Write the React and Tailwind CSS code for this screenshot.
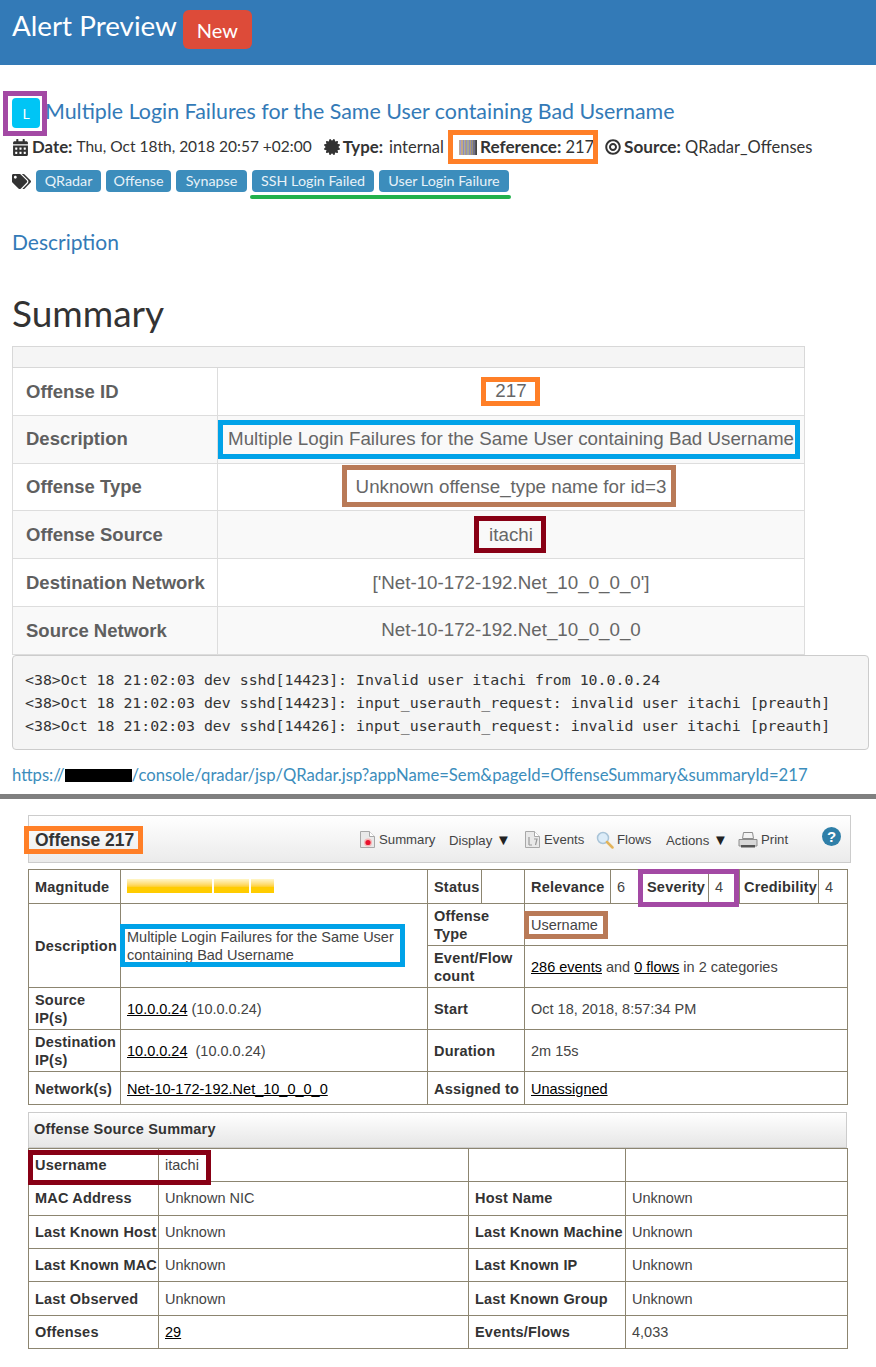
import { FaCalendarAlt, FaCertificate, FaBullseye, FaTags } from 'react-icons/fa'

const sourceSans = { fontFamily: 'Lato, sans-serif' }

const summaryRows = [
  ['Offense ID', '217'],
  ['Description', 'Multiple Login Failures for the Same User containing Bad Username'],
  ['Offense Type', 'Unknown offense_type name for id=3'],
  ['Offense Source', 'itachi'],
  ['Destination Network', "['Net-10-172-192.Net_10_0_0_0']"],
  ['Source Network', 'Net-10-172-192.Net_10_0_0_0'],
]

const logLines = [
  '<38>Oct 18 21:02:03 dev sshd[14423]: Invalid user itachi from 10.0.0.24',
  '<38>Oct 18 21:02:03 dev sshd[14423]: input_userauth_request: invalid user itachi [preauth]',
  '<38>Oct 18 21:02:03 dev sshd[14426]: input_userauth_request: invalid user itachi [preauth]',
]

const tags = [
  ['QRadar', 'w-[65px]'],
  ['Offense', 'w-[65px]'],
  ['Synapse', 'w-[71px]'],
  ['SSH Login Failed', 'w-[122px]'],
  ['User Login Failure', 'w-[130px]'],
]

const barcodeStripes = ['#b9a7a0', '#9c9cd0', '#c4a884', '#8a8ac4', '#a8b0a0', '#b59a78', '#9090c0', '#a8a890', '#8c8cb8', '#b09a70', '#8484a8', '#9c9070', '#707088', '#555', '#444']

const sourceRows = [
  ['Username', 'itachi', '', ''],
  ['MAC Address', 'Unknown NIC', 'Host Name', 'Unknown'],
  ['Last Known Host', 'Unknown', 'Last Known Machine', 'Unknown'],
  ['Last Known MAC', 'Unknown', 'Last Known IP', 'Unknown'],
  ['Last Observed', 'Unknown', 'Last Known Group', 'Unknown'],
  ['Offenses', '29', 'Events/Flows', '4,033'],
]

const Label = ({ children, className = 'pl-[6px]', ...rest }) => (
  <td {...rest} className={`border border-[#8c8570] pr-0 font-bold leading-[18px] tracking-[0.2px] text-[#333] ${className}`}>
    {children}
  </td>
)

const Value = ({ children, className = '', ...rest }) => (
  <td {...rest} className={`border border-[#8c8570] px-[6px] leading-[18px] text-[#444] ${className}`}>
    {children}
  </td>
)

const Lnk = ({ children }) => <span className="text-black underline">{children}</span>

function DocIcon({ dot }) {
  return (
    <svg width="17" height="19" viewBox="0 0 17 19" className="shrink-0">
      <path d="M1.5 1.5h9l5 5v11h-14z" fill="#e9e9e9" stroke="#a8a8a8" />
      <path d="M10.5 1.5v5h5" fill="#fff" stroke="#a8a8a8" />
      {dot ? (
        <>
          <circle cx="9" cy="12.5" r="4" fill="#f5b5b5" />
          <circle cx="9" cy="12.5" r="2.6" fill="#e8112d" />
        </>
      ) : (
        <path d="M5 7v8M5 15h3M10 9h3l-1.5 6" fill="none" stroke="#9a9a9a" strokeWidth="1.2" />
      )}
    </svg>
  )
}

function Toolbar() {
  return (
    <div className="ml-[28px] mt-[16px] flex h-[48px] w-[823px] items-center whitespace-nowrap border border-[#ccc] bg-gradient-to-b from-white to-[#ebebeb] pt-[2px] text-[13.2px] text-[#444]">
      <div className="ml-[6px] w-[99px] shrink-0 text-[17.5px] font-bold text-[#333]">Offense 217</div>
      <div className="ml-[225px] flex w-[76px] shrink-0 items-center gap-[3px]">
        <DocIcon dot />
        <span>Summary</span>
      </div>
      <span className="ml-[14px] w-[60px] shrink-0">Display <span className="text-[15px] text-[#222]">▼</span></span>
      <div className="ml-[15px] flex w-[58px] shrink-0 items-center gap-[3px]">
        <DocIcon />
        <span>Events</span>
      </div>
      <div className="ml-[14px] flex w-[54px] shrink-0 items-center gap-[3px]">
        <svg width="18" height="18" viewBox="0 0 18 18" className="shrink-0">
          <circle cx="7" cy="7" r="5.5" fill="#dcecf8" stroke="#a9c4d8" strokeWidth="1.5" />
          <path d="M11 11l5.5 5.5" stroke="#e3b45a" strokeWidth="2.5" strokeLinecap="round" />
        </svg>
        <span>Flows</span>
      </div>
      <span className="ml-[16px] w-[58px] shrink-0">Actions <span className="text-[15px] text-[#222]">▼</span></span>
      <div className="ml-[14px] flex w-[50px] shrink-0 items-center gap-[3px]">
        <svg width="20" height="18" viewBox="0 0 20 18" className="shrink-0">
          <path d="M5.5 1.5h9l1 6h-11z" fill="#f4f4f4" stroke="#8d8d8d" />
          <path d="M1 8.5h18v6.5h-18z" fill="#d8d8d8" stroke="#8d8d8d" />
          <path d="M3 14h14v2.5h-14z" fill="#555" />
        </svg>
        <span>Print</span>
      </div>
      <div className="ml-[34px] flex h-[19px] w-[19px] shrink-0 -translate-y-[3px] items-center justify-center rounded-full bg-[#2f7fa8] text-[15px] font-bold text-white">?</div>
    </div>
  )
}

function OffenseTable() {
  return (
    <table className="ml-[28px] mt-[6px] w-[819px] table-fixed border-collapse text-[14.5px] [&_td]:pt-[2px]">
      <colgroup>
        <col className="w-[92px]" />
        <col className="w-[307px]" />
        <col className="w-[54px]" />
        <col className="w-[43px]" />
        <col className="w-[86px]" />
        <col className="w-[30px]" />
        <col className="w-[68px]" />
        <col className="w-[31px]" />
        <col className="w-[79px]" />
        <col className="w-[29px]" />
      </colgroup>
      <tbody>
        <tr className="h-[34px]">
          <Label>Magnitude</Label>
          <Value>
            <div className="-mt-[2px] flex h-[14px] w-[147px] gap-[2px]">
              <div className="w-[85px] bg-gradient-to-b from-[#fff6c8] to-[#ffcc00] to-60%" />
              <div className="w-[35px] bg-gradient-to-b from-[#fff6c8] to-[#ffcc00] to-60%" />
              <div className="w-[23px] bg-gradient-to-b from-[#fff6c8] to-[#ffcc00] to-60%" />
            </div>
          </Value>
          <Label>Status</Label>
          <Value />
          <Label>Relevance</Label>
          <Value>6</Value>
          <Label>Severity</Label>
          <Value>4</Value>
          <Label className="pl-[4px]">Credibility</Label>
          <Value>4</Value>
        </tr>
        <tr className="h-[42px]">
          <Label rowSpan={2}>Description</Label>
          <Value rowSpan={2} className="pr-[20px]">
            Multiple Login Failures for the Same User containing Bad Username
          </Value>
          <Label colSpan={2}>Offense Type</Label>
          <Value colSpan={6}>Username</Value>
        </tr>
        <tr className="h-[42px]">
          <Label colSpan={2}>Event/Flow count</Label>
          <Value colSpan={6}>
            <Lnk>286 events</Lnk> and <Lnk>0 flows</Lnk> in 2 categories
          </Value>
        </tr>
        <tr className="h-[42px]">
          <Label>Source IP(s)</Label>
          <Value>
            <Lnk>10.0.0.24</Lnk> (10.0.0.24)
          </Value>
          <Label colSpan={2}>Start</Label>
          <Value colSpan={6}>Oct 18, 2018, 8:57:34 PM</Value>
        </tr>
        <tr className="h-[42px]">
          <Label>Destination IP(s)</Label>
          <Value>
            <Lnk>10.0.0.24</Lnk>&nbsp; (10.0.0.24)
          </Value>
          <Label colSpan={2}>Duration</Label>
          <Value colSpan={6}>2m 15s</Value>
        </tr>
        <tr className="h-[33px]">
          <Label>Network(s)</Label>
          <Value>
            <Lnk>Net-10-172-192.Net_10_0_0_0</Lnk>
          </Value>
          <Label colSpan={2}>Assigned to</Label>
          <Value colSpan={6}>
            <Lnk>Unassigned</Lnk>
          </Value>
        </tr>
      </tbody>
    </table>
  )
}

function SourceTable() {
  return (
    <div className="ml-[28px] mt-[7px] w-[819px]">
      <div className="flex h-[36px] items-center border border-[#ccc] bg-gradient-to-b from-white to-[#e6e6e6] pl-[5px] text-[14.5px] font-bold tracking-[0.2px] text-[#333]">
        Offense Source Summary
      </div>
      <table className="w-full table-fixed border-collapse text-[14.5px]">
        <colgroup>
          <col className="w-[130px]" />
          <col className="w-[310px]" />
          <col className="w-[157px]" />
          <col className="w-[222px]" />
        </colgroup>
        <tbody>
          {sourceRows.map(([a, b, c, d]) => (
            <tr key={a} className="h-[33.4px]">
              <Label>{a}</Label>
              <Value>{a === 'Offenses' ? <Lnk>{b}</Lnk> : b}</Value>
              <Label>{c}</Label>
              <Value>{d}</Value>
            </tr>
          ))}
        </tbody>
      </table>
    </div>
  )
}

// highlight boxes drawn over the two screenshots
const Annotations = () => (
  <>
    <div className="pointer-events-none absolute left-[3px] top-[91px] h-[45px] w-[44px] border-[5px] border-[#a349a4]" />
    <div className="pointer-events-none absolute left-[448px] top-[130px] h-[34px] w-[150px] border-[5px] border-[#ff7f27]" />
    <div className="pointer-events-none absolute left-[250px] top-[195px] h-[4px] w-[261px] rounded-full bg-[#22b14c]" />
    <div className="pointer-events-none absolute left-[481px] top-[377px] h-[29px] w-[59px] border-[5px] border-[#ff7f27]" />
    <div className="pointer-events-none absolute left-[218px] top-[420px] h-[39px] w-[582px] border-[5px] border-[#00a2e8]" />
    <div className="pointer-events-none absolute left-[342px] top-[465px] h-[42px] w-[334px] border-[5px] border-[#b97a57]" />
    <div className="pointer-events-none absolute left-[474px] top-[516px] h-[37px] w-[72px] border-[5px] border-[#880015]" />
    <div className="pointer-events-none absolute left-[24px] top-[826px] h-[28px] w-[119px] border-[5px] border-[#ff7f27]" />
    <div className="pointer-events-none absolute left-[120px] top-[924px] h-[43px] w-[285px] border-[5px] border-[#00a2e8]" />
    <div className="pointer-events-none absolute left-[638px] top-[869px] h-[38px] w-[101px] border-[5px] border-[#a349a4]" />
    <div className="pointer-events-none absolute left-[524px] top-[911px] h-[28px] w-[84px] border-[5px] border-[#b97a57]" />
    <div className="pointer-events-none absolute left-[28px] top-[1150px] h-[35px] w-[183px] border-[5px] border-[#880015]" />
  </>
)

export default function App() {
  return (
    <div className="relative h-[1367px] w-[876px] overflow-hidden bg-white" style={sourceSans}>
      {/* Alert header */}
      <header className="flex h-[65px] items-start bg-[#337ab7] pl-[12px] pt-[10px] text-white">
        <h1 className="text-[27.8px] leading-[32px]">Alert Preview</h1>
        <span className="ml-[6px] flex h-[39px] w-[69px] items-center justify-center rounded-[6px] bg-[#dd4b39] text-[20px]">New</span>
      </header>

      <div className="ml-[12px] mt-[33px] flex h-[30px] items-center">
        <div className="flex h-[30px] w-[28px] items-center justify-center rounded-[4px] bg-[#00c5f5] text-[14px] text-white">L</div>
        <h2 className="ml-[5px] -translate-y-[2px] text-[21.4px] leading-[30px] text-[#337ab7]">Multiple Login Failures for the Same User containing Bad Username</h2>
      </div>

      <div className="ml-[12px] mt-[5px] flex h-[28px] items-center whitespace-nowrap text-[16.5px] text-[#333]">
        <FaCalendarAlt className="mr-[3px] h-[17px] w-[17px] shrink-0" />
        <b className="text-[16.8px]">Date:</b>
        <span className="ml-[4px] text-[15.5px]">Thu, Oct 18th, 2018 20:57 +02:00</span>
        <FaCertificate className="ml-[12px] mr-[3px] h-[16px] w-[16px] shrink-0" />
        <b className="text-[16.8px]">Type:</b>
        <span className="ml-[6px]">internal</span>
        <div className="ml-[15px] mr-[3px] flex h-[15px] w-[18px] shrink-0">
          {barcodeStripes.map((c, i) => (
            <div key={i} className="h-full flex-1" style={{ backgroundColor: c }} />
          ))}
        </div>
        <b className="text-[17.2px]">Reference:</b>
        <span className="ml-[4px]">217</span>
        <FaBullseye className="ml-[11px] mr-[3px] h-[16px] w-[16px] shrink-0" />
        <b className="text-[17.2px]">Source:</b>
        <span className="ml-[4px]">QRadar_Offenses</span>
      </div>

      <div className="ml-[12px] mt-[9px] flex h-[22px] items-center gap-[5px]">
        <FaTags className="h-[17px] w-[19px] text-[#333]" />
        {tags.map(([t, w]) => (
          <span key={t} className={`flex h-[22px] items-center justify-center whitespace-nowrap rounded-[4px] bg-[#3c8dbc] text-[14.3px] text-[#e8f2f8] ${w}`}>{t}</span>
        ))}
      </div>

      <div className="ml-[12px] mt-[35px] text-[21px] leading-[30px] text-[#337ab7]">Description</div>

      <div className="ml-[12px] mt-[34px] text-[37px] leading-[44px] text-[#333]">Summary</div>

      <table className="ml-[12px] mt-[11px] w-[792px] table-fixed border-collapse text-[18.75px] text-[#666]" style={{ fontFamily: '"Liberation Sans", sans-serif' }}>
        <colgroup>
          <col className="w-[205px]" />
          <col className="w-[587px]" />
        </colgroup>
        <tbody>
          <tr className="h-[21px] bg-[#f5f5f5]">
            <td colSpan={2} className="border border-[#d8d8d8]" />
          </tr>
          {summaryRows.map(([k, v], i) => (
            <tr key={k} className={`h-[47.8px] ${i % 2 === 1 ? 'bg-[#f9f9f9]' : 'bg-white'}`}>
              <td className="border border-[#ddd] pl-[13px] text-[18.5px] font-bold text-[#5f5f5f]">{k}</td>
              <td className="border border-[#ddd] whitespace-nowrap text-center">{v}</td>
            </tr>
          ))}
        </tbody>
      </table>

      <pre className="ml-[12px] h-[95px] w-[857px] rounded-[4px] border border-[#ccc] bg-[#f5f5f5] px-[12px] pt-[13px] text-[14.86px] leading-[23px] text-[#333]" style={{ fontFamily: '"DejaVu Sans Mono", monospace' }}>
        {logLines.join('\n')}
      </pre>

      <div className="ml-[12px] mt-[13px] flex h-[26px] items-center whitespace-nowrap text-[16.66px] text-[#3c8dbc]">
        https://<span className="inline-block h-[13px] w-[67px] bg-black" />/console/qradar/jsp/QRadar.jsp?appName=Sem&amp;pageId=OffenseSummary&amp;summaryId=217
      </div>

      <div className="mt-[5px] h-[5px] bg-[#808080]" />

      <div style={{ fontFamily: '"Liberation Sans", sans-serif' }}>
        <Toolbar />
        <OffenseTable />
        <SourceTable />
      </div>

      <Annotations />
    </div>
  )
}
